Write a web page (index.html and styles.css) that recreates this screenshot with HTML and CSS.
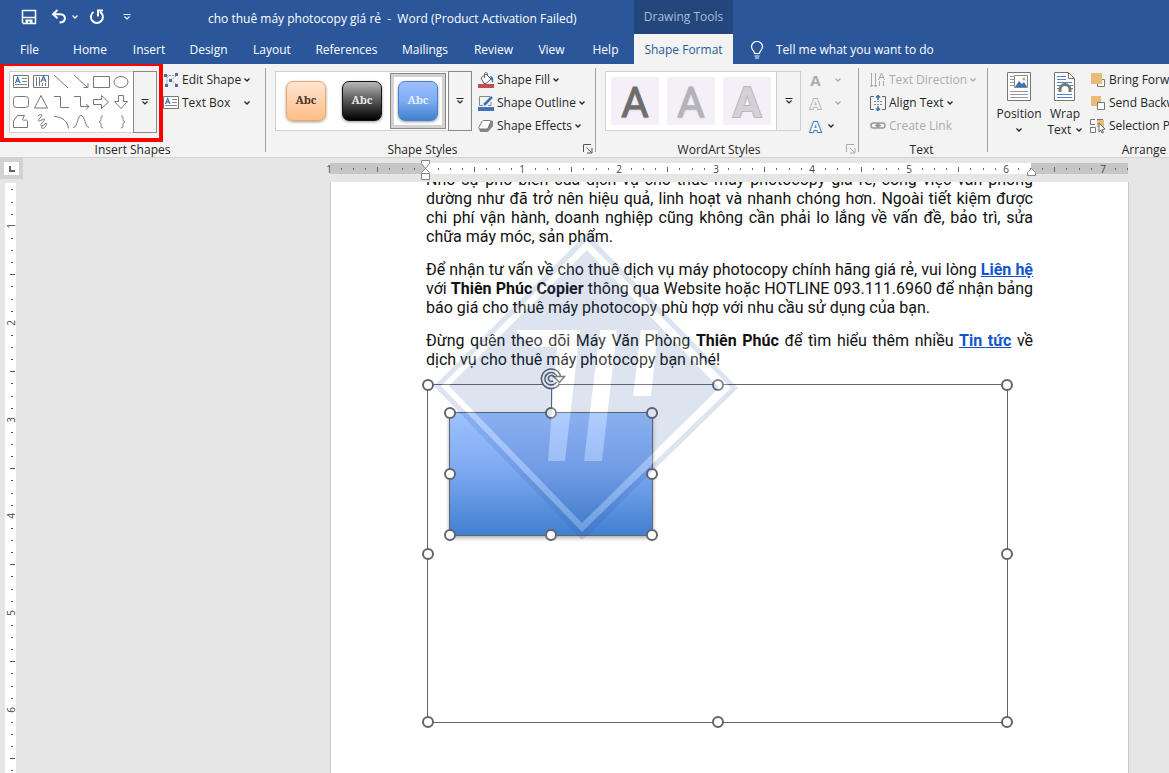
FILE: index.html
```html
<!DOCTYPE html>
<html lang="en">
<head>
<meta charset="utf-8">
<title>cho thuê máy photocopy giá rẻ - Word</title>
<link rel="stylesheet" href="styles.css">
</head>
<body>
<svg class="defs" aria-hidden="true">
  <defs>
    <symbol id="chev" viewBox="0 0 8 8"><path d="M1.500 2.500 4 5l2.500-2.500" fill="none" stroke="currentColor" stroke-width="1.300"/></symbol>
    <symbol id="more" viewBox="0 0 8 8"><path d="M.5 1.500h7M1.500 3.500 4 6l2.500-2.500" fill="none" stroke="currentColor" stroke-width="1.200"/></symbol>
    <symbol id="launch" viewBox="0 0 10 10"><path d="M.5 8V.5H8M3.500 3.500l5 5M9 4v5H4" fill="none" stroke="currentColor"/></symbol>
    <symbol id="tbox" viewBox="0 0 16 14"><path d="M.5.500h15v12H.5z" fill="#fff" stroke="#777"/><path d="M9 3.500h5M9 6.500h5M2 9.500h12" stroke="#888"/><path d="M2.500 8 4.700 2.500 7 8M3.300 6.200h3" fill="none" stroke="#3a73b5" stroke-width="1.200"/></symbol>
    <g id="inch"><path d="M12 5h1v2h-1zM24 5h1v2h-1zM36 5h1v2h-1zM48 4h1v5h-1zM60 5h1v2h-1zM73 5h1v2h-1zM85 5h1v2h-1z" fill="#666"/></g>
    <g id="vinch"><path d="M6 12h2v1H6zM6 24h2v1H6zM6 36h2v1H6zM5 48h5v1H5zM6 60h2v1H6zM6 73h2v1H6zM6 85h2v1H6z" fill="#555"/></g>
  </defs>
</svg>

<header class="header">
  <div class="top">
    <div class="quick">
      <button class="plain" aria-label="Save"><svg width="16" height="16" viewBox="0 0 16 16"><path d="M1.500 1.500h13v13h-12l-1-1z" fill="none" stroke="#fff" stroke-width="1.500"/><path d="M2 8.500h12" stroke="#fff" stroke-width="1.500"/><path d="M4.500 14.500v-4h7v4H9v-2H7v2z" fill="#fff"/></svg></button>
      <button class="plain undo" aria-label="Undo"><svg width="16" height="16" viewBox="0 0 16 16"><path d="M6.500 1 2 5.200l4.500 4M2.500 5.200h7c6 0 6 8.300-1 8.300" fill="none" stroke="#fff" stroke-width="2"/></svg></button>
      <button class="plain" aria-label="Undo list"><svg width="8" height="8"><use href="#chev"/></svg></button>
      <button class="plain redo" aria-label="Repeat"><svg width="16" height="16" viewBox="0 0 16 16"><path d="M4.500 3A6 6 0 1 0 11 2.800M9 7.500v-6h5" fill="none" stroke="#fff" stroke-width="2"/></svg></button>
      <button class="plain custom" aria-label="Customize"><svg width="8" height="8"><use href="#more"/></svg></button>
    </div>
    <div class="title">cho thuê máy photocopy giá rẻ&nbsp; -&nbsp; Word (Product Activation Failed)</div>
    <div class="context">Drawing Tools</div>
  </div>
  <nav class="tabs">
    <button>File</button><button>Home</button><button>Insert</button><button>Design</button><button>Layout</button><button>References</button><button>Mailings</button><button>Review</button><button>View</button><button>Help</button><button class="active">Shape Format</button>
    <button class="tell"><svg width="14" height="18" viewBox="0 0 14 18"><path d="M4.500 12.500c0-3-3-3.500-3-7a5.500 5 0 0 1 11 0c0 3.500-3 4-3 7zM4.500 15h5M5 17h4" fill="none" stroke="#fff" stroke-width="1.200"/></svg>Tell me what you want to do</button>
  </nav>
</header>

<main class="ribbon">
  <section class="group insert">
    <div class="body">
      <div class="gallery shapes">
        <svg class="shape-list" viewBox="0 0 124 62" role="img" aria-label="Shapes">
          <use href="#tbox" x="3" y="4" width="16" height="14"/>
          <g fill="none" stroke="#777"><path d="M23.500 4.500h15v12h-15z"/><path d="M26.500 6v9M29.500 6v9M32.500 12v3M35.500 12v3"/></g>
          <path d="m31 11 2.500-6L36 11M32 9h3" fill="none" stroke="#3a73b5" stroke-width="1.200"/>
          <g fill="none" stroke="#777">
            <path d="M44 4l14 13M64 4l13 12M78 12v4.500h-4.500M83.500 5.500h16v11h-16z"/><ellipse cx="111" cy="11" rx="7" ry="5.500"/>
            <rect x="3.500" y="25.500" width="15" height="11" rx="3"/><path d="m31 24.500 6.500 12.500h-13zM44 25.500h6.500v11H59M64 25.500h6.500v10H79M76 33l3 2.500-3 3"/>
            <path d="M83.500 28.500h8v-4l7 6.500-7 6.500v-4h-8zM108.500 24.500h5v6h4L111 37.500 104.500 30.500h4z"/>
            <path d="M3.500 56.500V50l4-5.500h7l-2 4c1 2 5-1 5 2v6zM28 45c4-3 5-1 2 2s-2 4 2 2 3 0 0 3 0 4 3 1 1 3-1 4-4 0-1-3M44 45.500c8 0 14 5 14.500 12M63 56.500c5 0 4-12 8-12s4 12 8 12M93 45c-4 0 0 5-4 6 4 1 0 6 4 6M111 45c4 0 0 5 4 6-4 1 0 6-4 6"/>
          </g>
        </svg>
        <button class="more on" aria-label="More shapes"><svg width="8" height="8"><use href="#more"/></svg></button>
      </div>
      <div class="stack">
        <button class="cmd"><svg width="16" height="16" viewBox="0 0 16 16"><path d="M3 3.500h10M4 4.500v8M13.500 12.500 8 8l5-4" fill="none" stroke="#999" stroke-dasharray="2 1"/><path d="M1 2h3v3H1zM12 1h3v3h-3zM12 12h3v3h-3zM2 12h3v3H2zM6 7h3v3H6z" fill="#3a73b5"/></svg>Edit Shape<svg class="chev"><use href="#chev"/></svg></button>
        <button class="cmd wide"><svg width="16" height="14"><use href="#tbox"/></svg><span>Text Box</span><svg class="chev"><use href="#chev"/></svg></button>
      </div>
    </div>
    <h2>Insert Shapes</h2>
    <div class="highlight"></div>
  </section>

  <section class="group styles">
    <div class="body">
      <div class="gallery presets">
        <button class="preset"><span class="chip orange">Abc</span></button>
        <button class="preset"><span class="chip black">Abc</span></button>
        <button class="preset chosen"><span class="chip blue">Abc</span></button>
        <button class="more on" aria-label="More styles"><svg width="8" height="8"><use href="#more"/></svg></button>
      </div>
      <div class="stack">
        <button class="cmd"><svg width="16" height="16" viewBox="0 0 16 16"><path d="M0 12h16v4H0z" fill="#c0504d"/><path d="m3 6 5-4 5 5-5 4.500H6z" fill="#fff" stroke="#666"/><path d="M6.500 6V2c0-2 3-2 3 0v2" fill="none" stroke="#666"/><path d="M12 4c3 0 4 3 2.500 7L13 7z" fill="#3a73b5"/></svg>Shape Fill<svg class="chev"><use href="#chev"/></svg></button>
        <button class="cmd"><svg width="16" height="16" viewBox="0 0 16 16"><path d="M0 12h16v4H0z" fill="#4472b4"/><path d="M12 1.500H1.500v9H5M13 7v3.500h-3" fill="none" stroke="#888"/><path d="M6 10 14 2" stroke="#3a73b5" stroke-width="2.500"/></svg>Shape Outline<svg class="chev"><use href="#chev"/></svg></button>
        <button class="cmd"><svg width="16" height="16" viewBox="0 0 16 16"><path d="m1 11 1 3h8l5-6V3l-4-1z" fill="#888"/><path d="M5.500 2.500h6c1 0 1.500 1 1 2L10 10c-.5 1-1 1-2 1H2c-1 0-1.500-1-1-2l3-5.500c.5-.7 1-1 1.500-1z" fill="#fff" stroke="#777"/></svg>Shape Effects<svg class="chev"><use href="#chev"/></svg></button>
      </div>
    </div>
    <h2>Shape Styles</h2>
    <button class="plain launcher" aria-label="Shape style settings"><svg width="10" height="10"><use href="#launch"/></svg></button>
  </section>

  <section class="group art">
    <div class="body">
      <div class="gallery letters">
        <button class="letter dark">A</button><button class="letter mid">A</button><button class="letter pale">A</button>
        <button class="more" aria-label="More WordArt"><svg width="8" height="8"><use href="#more"/></svg></button>
      </div>
      <div class="stack">
        <button class="cmd off"><b class="glyph">A</b><svg class="chev"><use href="#chev"/></svg></button>
        <button class="cmd off"><b class="glyph hollow">A</b><svg class="chev"><use href="#chev"/></svg></button>
        <button class="cmd effects"><b class="glyph glow">A</b><svg class="chev"><use href="#chev"/></svg></button>
      </div>
    </div>
    <h2>WordArt Styles</h2>
    <button class="plain launcher off" aria-label="Text effect settings"><svg width="10" height="10"><use href="#launch"/></svg></button>
  </section>

  <section class="group text">
    <div class="body">
      <div class="stack">
        <button class="cmd off"><svg width="16" height="16" viewBox="0 0 16 16"><path d="M1.500 1v13M5.500 1v13M9.500 9v5M13.500 9v5M0 13l1.500 2L3 13M4 13l1.500 2L7 13M8.500 8l3-7 3 7M9.500 5.500h4" fill="none" stroke="#aaa"/></svg>Text Direction<svg class="chev"><use href="#chev"/></svg></button>
        <button class="cmd"><svg width="16" height="16" viewBox="0 0 16 16"><path d="M4 1.500H.5v13H4M12 1.500h3.500v13H12" fill="none" stroke="#666"/><path d="M4 6.500h8M4 9.500h8" stroke="#888" stroke-dasharray="2 1"/><path d="M8 0v5M6 2.500 8 .5l2 2M8 16v-5M6 13.500l2 2 2-2" fill="none" stroke="#2e75b6" stroke-width="1.500"/></svg>Align Text<svg class="chev"><use href="#chev"/></svg></button>
        <button class="cmd off"><svg width="16" height="16" viewBox="0 0 16 16"><rect x="1" y="5" width="8" height="5" rx="2.500" fill="none" stroke="#999" stroke-width="1.500"/><rect x="7" y="5" width="8" height="5" rx="2.500" fill="none" stroke="#999" stroke-width="1.500"/><path d="M5 7.500h6" stroke="#999" stroke-width="1.500"/></svg>Create Link</button>
      </div>
    </div>
    <h2>Text</h2>
  </section>

  <section class="group arrange">
    <div class="body">
      <button class="big"><svg width="24" height="30" viewBox="0 0 24 30"><path d="M.5.500h23v28H.5z" fill="#fff" stroke="#777"/><path d="M3 4.500h4M3 7.500h4M3 10.500h4M3 13.500h4M3 19.500h18M3 22.500h18M3 25.500h18" stroke="#999"/><path d="M7.500 3.500h13v12h-13z" fill="#fff" stroke="#888"/><path d="m8 15 4-6 3 3 2-2 3 5z" fill="#3a73b5"/><circle cx="17" cy="7" r="1.500" fill="#e5a54b"/></svg>Position<svg class="chev"><use href="#chev"/></svg></button>
      <button class="big"><svg width="24" height="30" viewBox="0 0 24 30"><path d="M1.500.500h14l6 6v22h-20z" fill="#fff" stroke="#777"/><path d="M15.500.500v6h6" fill="none" stroke="#777"/><path d="M4 4.500h9M4 7.500h9M4 10.500h15M4 13.500h3M17 13.500h3M4 16.500h2M18 16.500h2M4 22.500h15M4 25.500h15" stroke="#4f87c5"/><path d="M7 20v-2.500a5 5 0 0 1 10 0V20" fill="none" stroke="#777" stroke-width="3"/></svg><span>Wrap<br>Text <svg class="chev"><use href="#chev"/></svg></span></button>
      <div class="stack">
        <button class="cmd"><svg width="16" height="16" viewBox="0 0 16 16"><path d="M7.500 7.500h7v7h-7z" fill="#fff" stroke="#777"/><path d="M1 1h11v11H1z" fill="#e8bc78"/></svg>Bring Forward</button>
        <button class="cmd"><svg width="16" height="16" viewBox="0 0 16 16"><path d="M1 1h10v10H1z" fill="#e8bc78"/><path d="M7.500 7.500h7v7h-7z" fill="#fff" stroke="#777"/></svg>Send Backward</button>
        <button class="cmd"><svg width="16" height="16" viewBox="0 0 16 16"><path d="M7 2h7v7H7z" fill="#e8bc78"/><path d="M5 1.500H.5v5H5M7 1.500h6M.5 9.500h5v5h-5z" fill="#fff" stroke="#777"/><path d="m9 5 6 6-3 .5 1.500 3-1.500.5-1.300-3L9 14z" fill="#fff" stroke="#666"/></svg>Selection Pane</button>
      </div>
    </div>
    <h2>Arrange</h2>
  </section>
</main>

<div class="workspace">
  <button class="corner" aria-label="Tab stop"><svg width="6" height="6" viewBox="0 0 6 6"><path d="M1 0v5h5" fill="none" stroke="#666" stroke-width="2"/></svg></button>
  <svg class="ruler" width="810" height="22" viewBox="-9 -5 810 22">
    <path d="M0 0h798v11H0z" fill="#c6c6c6"/><path d="M96 0h605v11H96z" fill="#fff"/>
    <svg width="798" height="12"><use href="#inch" x="-1"/><use href="#inch" x="96"/><use href="#inch" x="193"/><use href="#inch" x="289"/><use href="#inch" x="386"/><use href="#inch" x="483"/><use href="#inch" x="580"/><use href="#inch" x="676"/><use href="#inch" x="773"/></svg>
    <g class="nums"><text x="-1" y="10">1</text><text x="192" y="10">1</text><text x="289" y="10">2</text><text x="386" y="10">3</text><text x="482" y="10">4</text><text x="579" y="10">5</text><text x="676" y="10">6</text><text x="773" y="10">7</text></g>
    <path d="M91.500-2.500h8v3l-4 5-4-5zM91.500 10.500v-1l4-4 4 4v1zM91.500 10.500h8v6h-8zM697.500 12.500v-3l4-4 4 4v3z" fill="#fff" stroke="#888"/>
  </svg>
  <svg class="vruler" width="23" height="1600" viewBox="0 0 23 1600">
    <path d="M5 4h11v1597H5z" fill="#fff"/>
    <g transform="translate(5 -50)"><svg y="53" width="11" height="1547" viewBox="0 53 11 1547"><use href="#vinch"/><use href="#vinch" y="97"/><use href="#vinch" y="194"/><use href="#vinch" y="291"/><use href="#vinch" y="387"/><use href="#vinch" y="484"/><use href="#vinch" y="581"/></svg></g>
    <g class="nums"><text transform="translate(15 47) rotate(-90)">1</text><text transform="translate(15 144) rotate(-90)">2</text><text transform="translate(15 241) rotate(-90)">3</text><text transform="translate(15 337) rotate(-90)">4</text><text transform="translate(15 434) rotate(-90)">5</text><text transform="translate(15 531) rotate(-90)">6</text></g>
  </svg>
  <div class="view">
    <article class="page" lang="vi">
      <p>Nhờ sự phổ biến của dịch vụ cho thuê máy photocopy giá rẻ, công việc văn phòng dường như đã trở nên hiệu quả, linh hoạt và nhanh chóng hơn. Ngoài tiết kiệm được chi phí vận hành, doanh nghiệp cũng không cần phải lo lắng về vấn đề, bảo trì, sửa chữa máy móc, sản phẩm.</p>
      <p>Để nhận tư vấn về cho thuê dịch vụ máy photocopy chính hãng giá rẻ, vui lòng <a href="#lien-he">Liên hệ</a> <span class="keep">với <b>Thiên Phúc Copier</b> thông qua Website hoặc HOTLINE 093.111.6960 để nhận bảng</span> báo giá cho thuê máy photocopy phù hợp với nhu cầu sử dụng của bạn.</p>
      <p>Đừng quên theo dõi Máy Văn Phòng <b>Thiên Phúc</b> để tìm hiểu thêm nhiều <a href="#tin-tuc">Tin tức</a> về dịch vụ cho thuê máy photocopy bạn nhé!</p>
      <div class="frame canvas">
        <i class="h n w"></i><i class="h n c"></i><i class="h n e"></i><i class="h m w"></i><i class="h m e"></i><i class="h s w"></i><i class="h s c"></i><i class="h s e"></i>
        <div class="frame shape">
          <i class="stem"></i>
          <svg class="rotate" width="26" height="22" viewBox="0 0 26 22"><path d="M18 15A8 8 0 1 1 19 9" fill="none" stroke="#555b66" stroke-width="5"/><path d="M18 15A8 8 0 1 1 19 9" fill="none" stroke="#fff" stroke-width="2"/><path d="M13.500 8.500h11l-5 6z" fill="#fff" stroke="#555b66" stroke-width="1.500"/><path d="M13 13a3 3 0 1 1 1-4" fill="none" stroke="#555b66" stroke-width="1.500"/></svg>
          <i class="h n w"></i><i class="h n c"></i><i class="h n e"></i><i class="h m w"></i><i class="h m e"></i><i class="h s w"></i><i class="h s c"></i><i class="h s e"></i>
        </div>
      </div>
      <svg class="mark" width="306" height="308" viewBox="433 232 306 308" aria-hidden="true">
        <path fill-rule="evenodd" d="M587 233 738 388 582 540 434 386zM587 241 441 386 582 532 731 388z" fill="#2b5a9f" fill-opacity=".16"/>
        <path fill-rule="evenodd" d="M587 241 731 388 582 532 441 386zM587 250 449 386 582 523 719 388z" fill="#fff" fill-opacity=".22"/>
        <path fill-rule="evenodd" d="M587 250 719 388 582 523 449 386zM515 330l18 17h24l-9 114h17l15-131zM600 330l-16 131h18l15-131zM641 330l-8 66h18l7-66z" fill="#2b5a9f" fill-opacity=".16"/>
        <path d="M515 330l18 17h24l-9 114h17l15-131zM600 330l-16 131h18l15-131zM641 330l-8 66h18l7-66z" fill="#fff" fill-opacity=".2"/>
      </svg>
    </article>
  </div>
</div>
</body>
</html>
```
FILE: styles.css
```css
* { box-sizing: border-box; }
body {
  margin: 0;
  height: 100vh;
  overflow: hidden;
  display: flex;
  flex-direction: column;
  font: 12px/16px "Open Sans", "Noto Sans", sans-serif;
  color: #262626;
  background: #e6e6e6;
}
button {
  font: inherit;
  color: inherit;
  margin: 0;
  padding: 0;
  border: 0;
  background: none;
  white-space: nowrap;
}
svg { display: block; flex: none; }
.defs { position: absolute; width: 0; height: 0; }
.plain { display: flex; }

.header { background: #2b579a; color: #fff; flex: none; }
.top { display: grid; grid-template-columns: 208px 426px 99px; height: 34px; align-items: center; }
.quick { display: flex; align-items: center; padding-left: 21px; }
.undo { margin-left: 14px; }
.redo { margin-left: 10px; }
.quick .undo + .plain { margin-left: 4px; }
.custom { margin-left: 18px; }
.title { padding-top: 3px; white-space: nowrap; }
.context {
  align-self: stretch;
  display: flex;
  align-items: center;
  justify-content: center;
  color: #a9bddb;
  background: #23467c;
}
.tabs {
  display: grid;
  grid-template-columns: 59px 62px 56px 63px 64px 85px 72px 65px 51px 57px 99px auto;
  height: 30px;
  justify-content: start;
}
.tabs button { padding-top: 2px; }
.tabs .active { background: #f3f3f3; color: #2b579a; }
.tabs .tell { display: flex; align-items: center; gap: 12px; padding-left: 17px; }

.ribbon {
  flex: none;
  display: flex;
  height: 94px;
  overflow: hidden;
  background: #f3f3f3;
  border-bottom: 1px solid #d2d2d2;
}
.group { position: relative; flex: none; padding-top: 4px; }
.group::after {
  content: "";
  position: absolute;
  right: 0;
  top: 4px;
  bottom: 5px;
  width: 1px;
  background: #a0a0a0;
}
.group h2 { margin: 0; font: inherit; text-align: center; }
.body { display: flex; align-items: flex-start; height: 74px; }
.insert { width: 266px; padding-left: 9px; }
.styles { width: 330px; padding-left: 9px; }
.art { width: 263px; padding-left: 9px; }
.text { width: 129px; padding-left: 11px; }
.arrange { width: 314px; padding-left: 8px; }
.insert h2 { padding-right: 10px; }
.styles h2, .art h2 { padding-right: 26px; }
.text h2 { padding-right: 15px; }
.arrange h2 { padding-right: 10px; }
.launcher { position: absolute; right: 3px; bottom: 3px; color: #555; }
.launcher.off { color: #ababab; }

.gallery { display: flex; margin-top: 3px; height: 60px; background: #fff; border: 1px solid #d0d0d0; }
.more {
  width: 24px;
  align-self: stretch;
  display: flex;
  align-items: center;
  justify-content: center;
  background: #f3f3f3;
  border-left: 1px solid #d0d0d0;
}
.more.on { border: 1px solid #888; }
.shapes { height: 62px; margin-right: 6px; }
.shape-list { width: 124px; height: 62px; margin-top: -1px; }
.shapes .more, .presets .more { margin: -1px -1px -1px auto; }
.shapes .more { margin-left: -1px; }
.presets { width: 197px; margin-right: 6px; }
.preset { width: 56px; display: flex; align-items: center; justify-content: center; margin: 1px 0; }
.preset:first-child { margin-left: 2px; }
.chosen { border: 1px solid #888; box-shadow: inset 0 0 0 3px #d2d2d2; }
.chip {
  display: flex;
  align-items: center;
  justify-content: center;
  width: 40px;
  height: 40px;
  border-radius: 7px;
  padding-bottom: 3px;
  font: bold 11px/16px "Noto Serif", "DejaVu Serif Condensed", "Liberation Serif", serif;
  box-shadow: 0 1px 3px #0006;
}
.orange { color: #4a3524; background: linear-gradient(#ffe5d2, #ffbe86); border: 1px solid #eda66c; }
.black { color: #e8e8e8; background: linear-gradient(#b8b8b8, #555 50%, #000); border: 1px solid #111; }
.blue { color: #e3eeff; background: linear-gradient(#9dc0ff, #7dadf2 50%, #3f80ce); border: 1px solid #4c80c4; }

.letters { width: 196px; padding-left: 5px; }
.letters .more { margin-left: auto; flex: none; }
.letter {
  flex: none;
  width: 48px;
  height: 48px;
  margin: 5px 8px 0 0;
  padding-top: 3px;
  background: #f5f0f7;
  font: 400 42px/45px Roboto, sans-serif;
}
.letters .pale { margin-right: 0; }
.dark { color: #6d6d6d; text-shadow: 0 1px 2px #9998; -webkit-text-stroke: 1px #6d6d6d; }
.mid { color: #b5b3b7; text-shadow: 0 1px 2px #9998; -webkit-text-stroke: 1px #b5b3b7; }
.pale { color: #d5d1d7; font-weight: 700; -webkit-text-stroke: 2px #b9b5bb; paint-order: stroke fill; }

.stack { display: flex; flex-direction: column; }
.cmd { display: flex; align-items: center; gap: 3px; height: 23px; }
.chev { width: 8px; height: 8px; }
.cmd .chev { margin-left: -1px; }
.cmd.wide .chev { margin-left: auto; }
.off { color: #ababab; }
.art .stack { padding-left: 8px; }
.art .cmd { gap: 13px; }
.art .effects { gap: 6px; }
.glyph { width: 13px; font: 700 15px/18px "Open Sans", sans-serif; text-align: center; paint-order: stroke fill; }
.hollow { color: #f3f3f3; -webkit-text-stroke: 2px #b5b5b5; }
.glow { color: #fff; -webkit-text-stroke: 2px #2e6db4; text-shadow: 0 0 3px #5b9bd5; }
.big { display: flex; flex-direction: column; align-items: center; width: 46px; padding-top: 4px; line-height: 16px; }
.big > svg:first-child { margin-bottom: 4px; }
.big > .chev { margin-top: 4px; }
.big span .chev { display: inline-block; }
.arrange .stack { padding-left: 2px; }
.highlight { position: absolute; left: 0; right: 103px; top: -2px; height: 80px; border: 4px solid #f00; }

.workspace {
  flex: 1;
  min-height: 0;
  display: grid;
  grid-template: 21px minmax(0, 1fr) / 23px minmax(0, 1fr);
  overflow: hidden;
}
.corner { display: flex; align-items: center; justify-content: center; border: 4px solid #d2d2d2; background: #fff; }
.ruler { position: relative; margin-left: 298px; z-index: 2; }
.nums { font-size: 10px; fill: #444; text-anchor: middle; }
.view { margin-top: 3px; padding-left: 307px; overflow: hidden; }
.page {
  position: relative;
  display: flow-root;
  max-width: 799px;
  height: 1000px;
  padding: 0 95px;
  background: #fff;
  border: solid #c9c9c9;
  border-width: 0 1px;
  color: #111;
  font: 16px/19px Roboto, sans-serif;
  text-align: justify;
}
.page p { margin: 0 0 14px; }
.page p:first-child { margin-top: -12px; }
.page a { color: #1155cc; font-weight: 700; }
.keep { white-space: nowrap; }
.frame { position: absolute; border: 1px solid #60656e; }
.canvas { left: 96px; top: 202px; width: 581px; height: 339px; }
.shape {
  left: 21px;
  top: 27px;
  width: 204px;
  height: 124px;
  background: linear-gradient(#9dc1ff, #80aaf2 45%, #4080d0);
  box-shadow: 0 2px 4px #0005;
}
.h { position: absolute; width: 12px; height: 12px; margin: -6px; border: 2px solid #60656e; border-radius: 50%; background: #fff; }
.n { top: 0; }
.m { top: 50%; }
.s { top: 100%; }
.w { left: 0; }
.c { left: 50%; }
.e { left: 100%; }
.stem { position: absolute; left: 50%; bottom: 100%; height: 24px; border-left: 1px solid #60656e; }
.rotate { position: absolute; left: 90px; top: -45px; }
.mark { position: absolute; left: 102px; top: 50px; }
```
